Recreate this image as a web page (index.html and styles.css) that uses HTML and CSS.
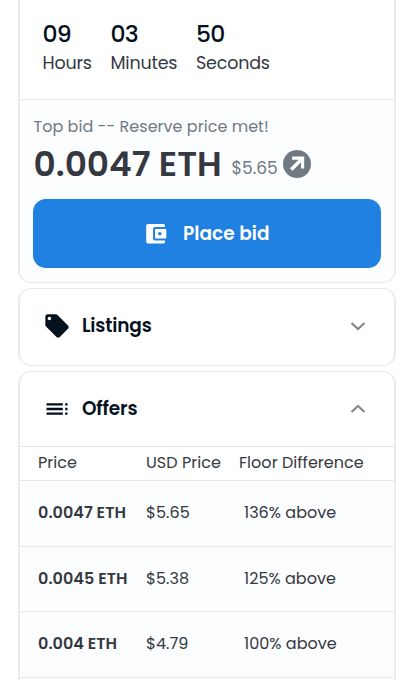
FILE: index.html
```html
<!DOCTYPE html>
<html lang="en">
<head>
<meta charset="utf-8">
<meta name="viewport" content="width=device-width, initial-scale=1">
<title>Auction</title>
<link rel="stylesheet" href="styles.css">
</head>
<body>
<main class="page">
  <section class="card auction">
    <div class="timer">
      <div class="unit"><span class="num">09</span><span class="lbl">Hours</span></div>
      <div class="unit"><span class="num">03</span><span class="lbl">Minutes</span></div>
      <div class="unit"><span class="num">50</span><span class="lbl">Seconds</span></div>
    </div>
    <div class="bid">
      <div class="bid-label">Top bid -- Reserve price met!</div>
      <div class="bid-price">
        <span class="eth">0.0047 ETH</span>
        <span class="usd">$5.65</span>
        <svg class="arrow" viewBox="0 0 28 28"><circle cx="14" cy="14" r="14" fill="#707a83"/><path d="M9.100 6.500H21.200V18.600H18V12.300L9.500 20.800L7 18.300L15.600 9.700H9.100Z" fill="#fff"/></svg>
      </div>
      <button class="place">
        <svg class="wallet" viewBox="0 0 26 26"><path fill="#fff" fill-rule="evenodd" d="M5 3H20.500Q22 3 22 4.500V6H12Q10 6 10 8V17.500Q10 19.500 12 19.500H22V21Q22 22.500 20.500 22.500H5Q3.200 22.500 3.200 20.700V4.800Q3.200 3 5 3ZM13 8H22.300Q23.300 8 23.300 9V16.500Q23.300 17.500 22.300 17.500H13Q12 17.500 12 16.500V9Q12 8 13 8ZM16.800 11A1.800 1.800 0 1 0 16.800 14.600A1.800 1.800 0 1 0 16.800 11Z"/></svg>
        <span>Place bid</span>
      </button>
    </div>
  </section>

  <section class="card panel">
    <header class="head">
      <svg class="ico" viewBox="0 0 24 24"><path fill="#04111d" d="M21.410 11.580l-9-9C12.050 2.220 11.550 2 11 2H4c-1.100 0-2 .9-2 2v7c0 .550.220 1.050.590 1.420l9 9c.360.360.860.580 1.410.580s1.050-.220 1.410-.590l7-7c.370-.360.590-.860.590-1.410s-.230-1.060-.590-1.420zM5.500 7C4.670 7 4 6.330 4 5.500S4.670 4 5.500 4 7 4.670 7 5.500 6.330 7 5.500 7z"/></svg>
      <h2>Listings</h2>
      <svg class="chev" viewBox="0 0 16 10"><path d="M1.500 2L8 8L14.500 2" fill="none" stroke="#81888e" stroke-width="2.200"/></svg>
    </header>
  </section>

  <section class="card panel open">
    <header class="head">
      <svg class="ico" viewBox="0 0 24 24"><path fill="#04111d" d="M3 9h14V7H3v2zm0 4h14v-2H3v2zm0 4h14v-2H3v2zm16 0h2v-2h-2v2zm0-10v2h2V7h-2zm0 6h2v-2h-2v2z"/></svg>
      <h2>Offers</h2>
      <svg class="chev" viewBox="0 0 16 10"><path d="M1.500 8L8 2L14.500 8" fill="none" stroke="#81888e" stroke-width="2.200"/></svg>
    </header>
    <div class="row thead"><span>Price</span><span>USD Price</span><span>Floor Difference</span></div>
    <div class="row"><b>0.0047 ETH</b><span>$5.65</span><span class="diff">136% above</span></div>
    <div class="row"><b>0.0045 ETH</b><span>$5.38</span><span class="diff">125% above</span></div>
    <div class="row"><b>0.004 ETH</b><span>$4.79</span><span class="diff">100% above</span></div>
    <div class="row"></div>
  </section>
</main>
</body>
</html>
```
FILE: styles.css
```css
* { box-sizing: border-box; }
body {
  margin: 0;
  background: #fff;
  color: #353840;
  font-family: Poppins, Inter, sans-serif;
}
.page {
  height: 680px;
  overflow: hidden;
  padding: 0 18px;
  display: flex;
  flex-direction: column;
  gap: 5px;
}
.card {
  flex: none;
  border: solid #e9ecef;
  border-width: 1px 2px;
  border-radius: 13px;
  background: #fff;
  overflow: hidden;
}
.auction {
  height: 283px;
  border-top: 0;
  border-top-left-radius: 0;
  border-top-right-radius: 0;
}
.timer {
  height: 100px;
  border-bottom: 1px solid #e7eaed;
  padding: 18px 0 0 22.500px;
  display: flex;
}
.unit { display: flex; flex-direction: column; width: 68px; }
.unit:nth-child(2) { width: 85.500px; }
.num { font-size: 23.500px; line-height: 31px; color: #04111d; font-weight: 500; letter-spacing: -.7px; }
.lbl { font-size: 17.500px; line-height: 28px; letter-spacing: -0.200px; }
.bid { height: 183px; background: #fbfdff; padding: 14px 13px 0; }
.bid-label { padding-left: .5px; font-size: 16px; line-height: 25px; letter-spacing: .03px; color: #707a83; white-space: nowrap; }
.bid-price { display: flex; height: 60px; align-items: flex-start; white-space: nowrap; }
.eth { padding-left: .5px; width: 198.500px; font-size: 34.400px; line-height: 50px; font-weight: 600; }
.usd { width: 51.300px; font-size: 17px; line-height: 59px; color: #707a83; }
.arrow { width: 28px; height: 28px; margin-top: 11px; }
.place {
  width: 348px;
  height: 69px;
  border: 0;
  border-radius: 13px;
  background: #2081e2;
  color: #fff;
  font: 600 18.500px/30px Poppins, Inter, sans-serif;
  display: flex;
  align-items: center;
  padding: 0 0 0 110px;
  gap: 14px;
}
.place span { letter-spacing: .05px; }
.wallet { width: 26px; height: 26px; }
.panel { height: 78px; }
.open { height: 340px; }
.head { height: 74px; display: flex; align-items: center; padding: 0 28px 0 22.500px; }
.ico { width: 28px; height: 28px; }
h2 { margin: 0 auto 0 11.500px; font-size: 18.500px; line-height: 28px; font-weight: 600; letter-spacing: -.15px; color: #04111d; }
.chev { width: 16px; height: 10px; }
.row {
  height: 65.500px;
  border-top: 1px solid #e5e8eb;
  background: #fbfdff;
  display: grid;
  grid-template-columns: 108px 93px 1fr;
  align-items: center;
  padding: 0 0 1px 18px;
  font-size: 16px;
  letter-spacing: .04px;
  white-space: nowrap;
}
.thead { height: 34px; background: #fff; padding-bottom: 2px; }
.row b { font-weight: 600; }
.diff { padding-left: 5px; }
```
